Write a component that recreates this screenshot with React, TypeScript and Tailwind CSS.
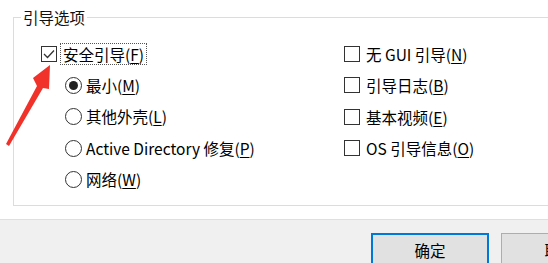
import React from 'react';

const font = { fontFamily: '"Noto Sans CJK SC", "Noto Sans", sans-serif' };

const Mn = ({ k }: { k: string }) => (
    <span>
        (<span className="underline underline-offset-2">{k}</span>)
    </span>
);

const Check = ({ checked, label, k, focus }: { checked?: boolean; label: string; k: string; focus?: boolean }) => (
    <div className="flex items-center h-[31.5px]">
        <div className="w-[16px] h-[16px] border border-[#333333] bg-white flex items-center justify-center shrink-0">
            {checked && (
                <svg width="12" height="10" viewBox="0 0 12 10">
                    <path d="M1 5 L4.5 8.5 L11 1.5" fill="none" stroke="#333333" strokeWidth="1.3" />
                </svg>
            )}
        </div>
        <span className={'ml-[4px] px-[2px] leading-[20px] ' + (focus ? 'outline outline-1 outline-dotted outline-[#555555]' : '')}>
            {label}
            <Mn k={k} />
        </span>
    </div>
);

const Radio = ({ checked, label, k }: { checked?: boolean; label: string; k: string }) => (
    <div className="flex items-center h-[31.5px] pl-[24px]">
        <div className="w-[17px] h-[17px] rounded-full border border-[#333333] bg-white flex items-center justify-center shrink-0">
            {checked && <div className="w-[9px] h-[9px] rounded-full bg-[#222222]" />}
        </div>
        <span className="ml-[4px]">
            {label}
            <Mn k={k} />
        </span>
    </div>
);

export default function App() {
    return (
        <div className="w-[548px] h-[263px] overflow-hidden bg-white text-[15.5px] text-black relative" style={font}>
            <div className="h-[219px] pt-[17px] pl-[13px]">
                <div className="relative w-[560px] h-[189px] border border-[#dcdcdc] pt-[20px] pl-[27px]">
                    <div className="absolute -top-[11px] left-[7px] bg-white px-[2px] leading-[20px] text-[#111111]">引导选项</div>
                    <div className="grid grid-cols-[303px_1fr]">
                        <div className="flex flex-col">
                            <Check checked focus label="安全引导" k="F" />
                            <Radio checked label="最小" k="M" />
                            <Radio label="其他外壳" k="L" />
                            <Radio label="Active Directory 修复" k="P" />
                            <Radio label="网络" k="W" />
                        </div>
                        <div className="flex flex-col">
                            <Check label="无 GUI 引导" k="N" />
                            <Check label="引导日志" k="B" />
                            <Check label="基本视频" k="E" />
                            <Check label="OS 引导信息" k="O" />
                        </div>
                    </div>
                </div>
            </div>
            <div className="h-[44px] bg-[#f0f0f0] border-t border-[#dfdfdf] pt-[13px] pl-[371px] flex gap-[12px]">
                <button className="w-[118px] h-[36px] shrink-0 bg-[#e1e1e1] border-2 border-[#0078d7] text-[15.5px]">确定</button>
                <button className="w-[118px] h-[36px] shrink-0 bg-[#e1e1e1] border border-[#adadad] text-[15.5px]">取消</button>
            </div>
            <svg className="absolute left-0 top-0 pointer-events-none" width="548" height="263">
                <polygon points="50,65 49,89 43,88 9,146 6,144 37,86 33,78" fill="#f0322a" />
            </svg>
        </div>
    );
}
